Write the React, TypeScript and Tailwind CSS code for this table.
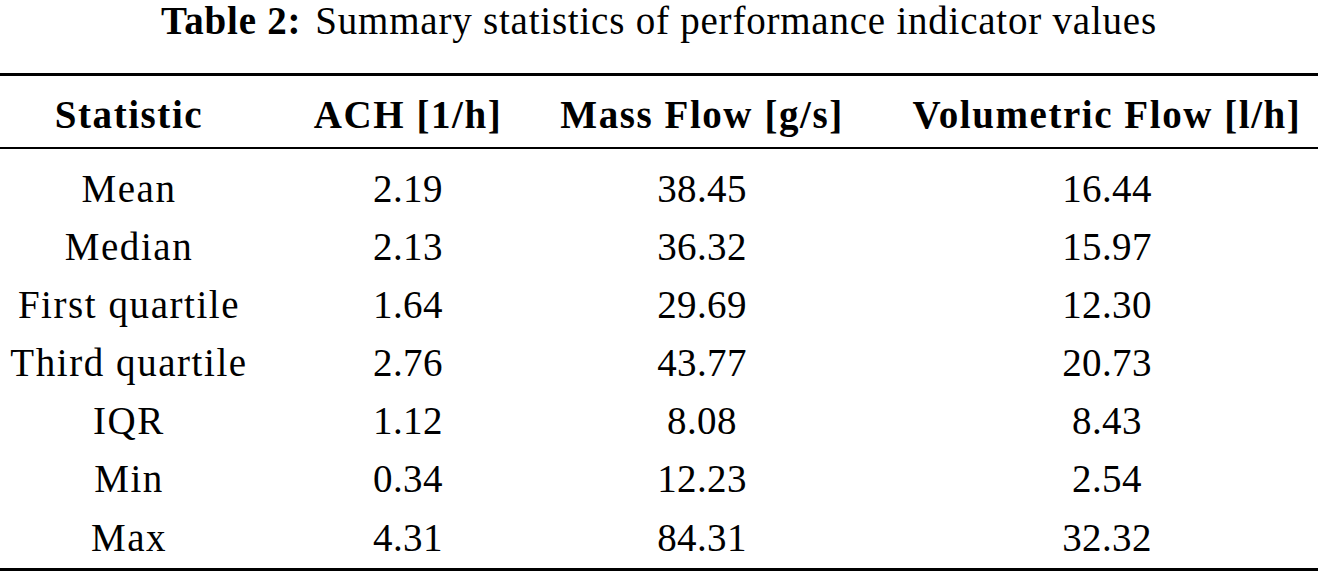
const rows: [string, string, string, string][] = [
  ["Mean", "2.19", "38.45", "16.44"],
  ["Median", "2.13", "36.32", "15.97"],
  ["First quartile", "1.64", "29.69", "12.30"],
  ["Third quartile", "2.76", "43.77", "20.73"],
  ["IQR", "1.12", "8.08", "8.43"],
  ["Min", "0.34", "12.23", "2.54"],
  ["Max", "4.31", "84.31", "32.32"],
];

const cols = "grid grid-cols-[258px_300px_288px_472px]";

export default function App() {
  return (
    <div
      className="w-[1318px] h-[574px] bg-white text-black text-[39px] leading-none whitespace-nowrap"
      style={{ fontFamily: '"Liberation Serif", serif' }}
    >
      <div className="h-[73px] text-center pt-[1px] tracking-[0.02em]">
        <span className="font-bold">Table 2:</span>
        <span className="ml-[14px]">Summary statistics of performance indicator values</span>
      </div>
      <div className="border-t-[3px] border-black" />
      <div className={`${cols} h-[71px] items-center pt-[5px] font-bold tracking-[0.04em]`}>
        <div className="text-center">Statistic</div>
        <div className="text-center">ACH [1/h]</div>
        <div className="text-center">Mass Flow [g/s]</div>
        <div className="text-center pl-[50px]">Volumetric Flow [l/h]</div>
      </div>
      <div className="border-t-[2px] border-black" />
      <div className="pt-[10px] pb-[2px]">
        {rows.map((r) => (
          <div key={r[0]} className={`${cols} h-[58.17px] items-center`}>
            <div className="text-center tracking-[0.04em]">{r[0]}</div>
            <div className="text-center tracking-[0.01em]">{r[1]}</div>
            <div className="text-center tracking-[0.01em]">{r[2]}</div>
            <div className="text-center pl-[50px] tracking-[0.01em]">{r[3]}</div>
          </div>
        ))}
      </div>
      <div className="border-t-[3px] border-black" />
    </div>
  );
}
